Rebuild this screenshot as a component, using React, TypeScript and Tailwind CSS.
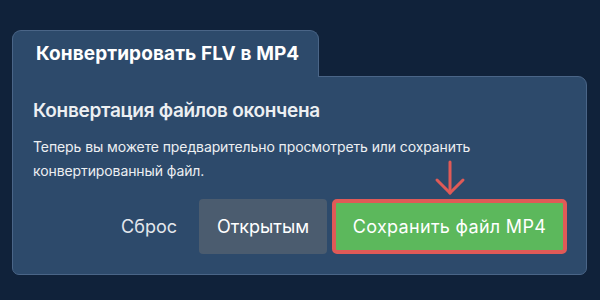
import React from "react";

export default function App() {
  return (
    <div
      className="w-[600px] h-[300px] bg-[#10223a] pt-[30px] pl-[12px] pr-[13px] overflow-hidden"
      style={{ fontFamily: "Inter, 'Noto Sans', sans-serif" }}
    >
      <div className="relative z-10 w-[307px] h-[47px] bg-[#2d4a6b] border-l border-t border-r border-[#4a6587] rounded-t-[9px] pl-[23px] flex items-center">
        <span className="text-[19px] font-bold text-white tracking-[0.1px]">
          Конвертировать FLV в MP4
        </span>
      </div>
      <div className="-mt-px bg-[#2d4a6b] border border-[#4a6587] rounded-tr-[9px] rounded-b-[7px] pt-[20px] pl-[20px] pr-[19px] pb-[20px]">
        <h2 className="text-[19px] leading-[28px] font-semibold text-[#eceff2] tracking-[-0.3px]">
          Конвертация файлов окончена
        </h2>
        <p className="mt-[10px] text-[14px] leading-[24px] text-[#eceff2] tracking-[-0.1px]">
          Теперь вы можете предварительно просмотреть или сохранить
          <br />
          конвертированный файл.
        </p>
        <div className="mt-[16px] flex justify-end items-center">
          <button className="text-[18px] text-[#e3e7ec] mr-[22px]">Сброс</button>
          <button className="w-[128px] h-[55px] rounded-[4px] bg-[#4b5c6f] text-[18px] text-white">
            Открытым
          </button>
          <div className="relative ml-[5px]">
            <svg
              className="absolute left-1/2 -translate-x-1/2 -top-[39px]"
              width="32"
              height="36"
              viewBox="0 0 32 36"
              fill="none"
              stroke="#e05a57"
              strokeWidth="3"
              strokeLinecap="round"
              strokeLinejoin="round"
            >
              <path d="M16 2 V33" />
              <path d="M3 20 L16 33 L29 20" />
            </svg>
            <button className="w-[235px] h-[55px] rounded-[5px] bg-[#5cb85c] border-[4px] border-[#e05a57] text-[18px] text-white tracking-[0.3px]">
              Сохранить файл MP4
            </button>
          </div>
        </div>
      </div>
    </div>
  );
}
